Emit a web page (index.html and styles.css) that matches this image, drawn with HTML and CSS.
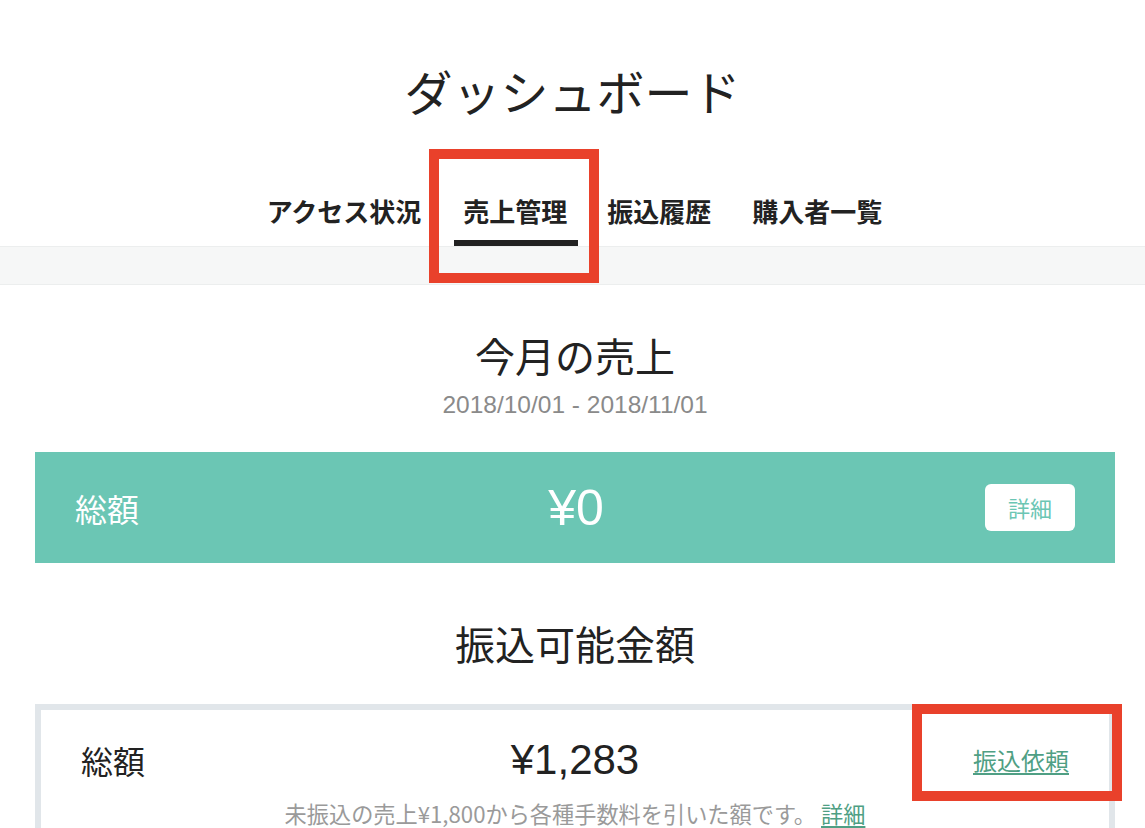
FILE: index.html
```html
<!DOCTYPE html>
<html lang="ja">
<head>
<meta charset="utf-8">
<title>ダッシュボード</title>
<link rel="stylesheet" href="styles.css">
</head>
<body>
<header class="header">
  <h1 class="title">ダッシュボード</h1>
  <nav class="tabs">
    <a class="tab">アクセス状況</a>
    <a class="tab tab-active">売上管理<span class="mark mark-tab"></span></a>
    <a class="tab">振込履歴</a>
    <a class="tab">購入者一覧</a>
  </nav>
</header>
<div class="band"></div>
<main class="main">
  <section class="section">
    <h2 class="heading">今月の売上</h2>
    <p class="period">2018/10/01 - 2018/11/01</p>
    <div class="total-card">
      <span class="label">総額</span>
      <span class="amount-big">¥0</span>
      <span class="end"><a class="detail-btn">詳細</a></span>
    </div>
  </section>
  <section class="section">
    <h2 class="heading heading-2">振込可能金額</h2>
    <div class="payout-card">
      <div class="payout-row">
        <span class="label label-dark">総額</span>
        <span class="amount">¥1,283</span>
        <span class="end"><a class="link link-request">振込依頼<span class="mark mark-link"></span></a></span>
      </div>
      <p class="note">未振込の売上¥1,800から各種手数料を引いた額です。 <a class="link">詳細</a></p>
    </div>
  </section>
</main>
</body>
</html>
```
FILE: styles.css
```css
* { box-sizing: border-box; }
html, body { margin: 0; padding: 0; background: #fff; }
body {
  font-family: "Noto Sans CJK JP", "Liberation Sans", sans-serif;
  color: #222;
  overflow: hidden;
}
.header { text-align: center; padding-top: 60px; }
.title {
  margin: 0;
  font-size: 48px;
  line-height: 60px;
  font-weight: 400;
  color: #222;
}
.tabs {
  display: flex;
  justify-content: center;
  gap: 21px;
  margin-top: 73px;
  padding-left: 4px;
}
.tab {
  position: relative;
  display: block;
  font-size: 26px;
  font-weight: 700;
  line-height: 36px;
  padding: 0 10px 11px;
  border-bottom: 6px solid transparent;
  color: #222;
}
.tab-active {
  border-bottom-color: #222;
  padding: 0 11px 11px 9px;
  margin-right: -2px;
  margin-left: 2px;
}
.mark {
  position: absolute;
  border: 10px solid #e9412b;
  pointer-events: none;
}
.mark-tab { top: -44px; left: -25px; right: -21px; bottom: -43px; }
.band {
  height: 39px;
  background: #f6f7f7;
  border-top: 1px solid #eceeee;
  border-bottom: 1px solid #eceeee;
}
.main { margin: 0 30px 0 35px; }
.section { text-align: center; }
.heading {
  margin: 45px 0 0;
  font-size: 40px;
  line-height: 50px;
  font-weight: 400;
}
.heading-2 { margin-top: 55px; }
.period {
  margin: 10px 0 0;
  font-family: "Liberation Sans", sans-serif;
  font-size: 24.5px;
  line-height: 30px;
  color: #8a8a8a;
}
.total-card {
  margin-top: 32px;
  height: 111px;
  background: #6bc6b4;
  color: #fff;
  display: grid;
  grid-template-columns: 1fr auto 1fr;
  align-items: center;
  padding: 0 40px;
}
.label {
  text-align: left;
  font-size: 32px;
  line-height: 44px;
  font-weight: 400;
}
.label-dark { color: #222; }
.amount-big {
  font-family: "Liberation Sans", sans-serif;
  font-size: 50px;
  line-height: 60px;
  padding-left: 2px;
}
.end { text-align: right; }
.detail-btn {
  display: inline-block;
  width: 90px;
  height: 47px;
  line-height: 47px;
  background: #fff;
  color: #6bc6b4;
  border-radius: 6px;
  font-size: 22px;
  text-align: center;
}
.payout-card {
  margin-top: 36px;
  border: 6px solid #e1e6ea;
  padding: 28px 40px 20px 40px;
  height: 200px;
}
.payout-row {
  display: grid;
  grid-template-columns: 1fr auto 1fr;
  align-items: center;
}
.amount {
  font-family: "Liberation Sans", sans-serif;
  font-size: 42px;
  line-height: 44px;
  letter-spacing: 0;
  color: #222;
}
.link {
  color: #4f9f84;
  text-decoration: underline;
  text-underline-offset: 3px;
}
.link-request {
  position: relative;
  display: inline-block;
  font-size: 24px;
  line-height: 44px;
}
.mark-link { top: -34px; left: -61px; right: -53px; bottom: -19px; }
.note {
  margin: 16px 0 0;
  font-size: 22.2px;
  line-height: 30px;
  color: #9a9a9a;
}
```
